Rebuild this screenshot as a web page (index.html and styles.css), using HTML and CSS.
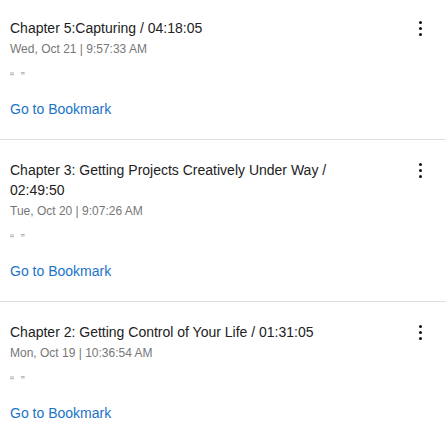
FILE: index.html
```html
<!DOCTYPE html>
<html>
<head>
<meta charset="utf-8">
<link rel="stylesheet" href="styles.css">
</head>
<body>
<div class="list">
  <div class="item">
    <div class="content">
      <div class="title">Chapter 5:Capturing / 04:18:05</div>
      <div class="date">Wed, Oct 21 | 9:57:33 AM</div>
      <div class="quote">“&nbsp;&nbsp;”</div>
      <a class="link" href="#">Go to Bookmark</a>
    </div>
    <div class="menu"><span></span><span></span><span></span></div>
  </div>
  <div class="item">
    <div class="content">
      <div class="title">Chapter 3: Getting Projects Creatively Under Way / 02:49:50</div>
      <div class="date">Tue, Oct 20 | 9:07:26 AM</div>
      <div class="quote">“&nbsp;&nbsp;”</div>
      <a class="link" href="#">Go to Bookmark</a>
    </div>
    <div class="menu"><span></span><span></span><span></span></div>
  </div>
  <div class="item">
    <div class="content">
      <div class="title">Chapter 2: Getting Control of Your Life / 01:31:05</div>
      <div class="date">Mon, Oct 19 | 10:36:54 AM</div>
      <div class="quote">“&nbsp;&nbsp;”</div>
      <a class="link" href="#">Go to Bookmark</a>
    </div>
    <div class="menu"><span></span><span></span><span></span></div>
  </div>
</div>
</body>
</html>
```

FILE: styles.css
```css
html, body {
  margin: 0;
  padding: 0;
  background: #fff;
  font-family: "Liberation Sans", Arial, sans-serif;
}
.list {
  display: flex;
  flex-direction: column;
}
.item {
  display: flex;
  align-items: flex-start;
  padding: 20px 14px 20px 10px;
  border-bottom: 1px solid #dedede;
}
.item:first-child {
  padding-top: 18px;
}
.content {
  flex: 1;
  display: flex;
  flex-direction: column;
  padding-right: 40px;
}
.title {
  font-size: 14px;
  line-height: 20px;
  color: #222;
}
.date {
  margin-top: 3px;
  font-size: 12px;
  line-height: 16px;
  color: #777;
}
.quote {
  margin-top: 12px;
  font-size: 12px;
  line-height: 16px;
  color: #999;
}
.link {
  margin-top: 14px;
  font-size: 14px;
  line-height: 20px;
  color: #1a73c8;
  text-decoration: none;
}
.menu {
  width: 24px;
  height: 20px;
  display: flex;
  flex-direction: column;
  align-items: center;
  justify-content: center;
  gap: 3px;
}
.menu span {
  width: 3px;
  height: 3px;
  border-radius: 50%;
  background: #111;
}
```
